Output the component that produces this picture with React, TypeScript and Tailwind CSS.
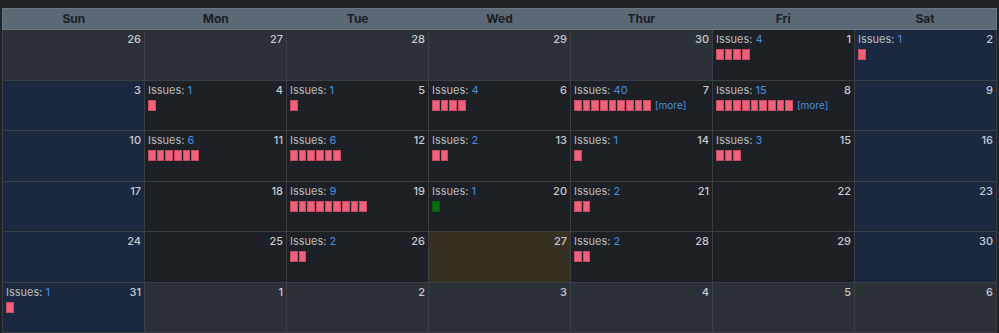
import React from 'react'

type Day = {
  n: number
  kind: 'other' | 'cur' | 'weekend' | 'today'
  issues?: number
  bars?: number
  green?: boolean
  more?: boolean
}

const o = (n: number): Day => ({ n, kind: 'other' })
const c = (n: number, issues?: number, bars?: number, more?: boolean): Day => ({
  n,
  kind: 'cur',
  issues,
  bars: bars ?? issues,
  more,
})
const w = (n: number, issues?: number): Day => ({ n, kind: 'weekend', issues, bars: issues })

const weeks: Day[][] = [
  [o(26), o(27), o(28), o(29), o(30), c(1, 4), w(2, 1)],
  [w(3), c(4, 1), c(5, 1), c(6, 4), c(7, 40, 9, true), c(8, 15, 9, true), w(9)],
  [w(10), c(11, 6), c(12, 6), c(13, 2), c(14, 1), c(15, 3), w(16)],
  [w(17), c(18), c(19, 9), { n: 20, kind: 'cur', issues: 1, bars: 1, green: true }, c(21, 2), c(22), w(23)],
  [w(24), c(25), c(26, 2), { n: 27, kind: 'today' }, c(28, 2), c(29), w(30)],
  [w(31, 1), o(1), o(2), o(3), o(4), o(5), o(6)],
]

const days = ['Sun', 'Mon', 'Tue', 'Wed', 'Thur', 'Fri', 'Sat']

const bg = {
  other: 'bg-[#2c3138]',
  cur: 'bg-[#1d2025]',
  weekend: 'bg-[#1b2940]',
  today: 'bg-[#35301f]',
}

function Cell({ d }: { d: Day }) {
  return (
    <div className={`h-[50.5px] border-r border-b border-[#3a3f46] px-[3px] pt-[3px] ${bg[d.kind]}`}>
      <div className="flex items-start justify-between text-[11px] leading-[13px]">
        <div>
          {d.issues !== undefined && (
            <span className="text-[#b9bdc3]">
              Issues: <span className="text-[#4a90e2]">{d.issues}</span>
            </span>
          )}
        </div>
        <span className="font-medium text-[#c8cbcf]">{d.n}</span>
      </div>
      {d.bars ? (
        <div className="mt-[3px] flex items-center">
          <div className="flex gap-px">
            {Array.from({ length: d.bars }).map((_, i) => (
              <div
                key={i}
                className={
                  d.green
                    ? 'h-[11px] w-[7.67px] border border-[#0b5a0b] bg-[#0b6e0b]'
                    : 'h-[11px] w-[7.67px] border border-[#c94a61] bg-[#f0627c]'
                }
              />
            ))}
          </div>
          {d.more && <span className="ml-[4px] text-[10px] leading-[11px] text-[#4a90e2]">[more]</span>}
        </div>
      ) : null}
    </div>
  )
}

export default function App() {
  return (
    <div
      className="h-[333px] w-[999px] overflow-hidden bg-[#1f2226] pt-[8px] pl-[2px]"
      style={{ fontFamily: 'Inter, "Liberation Sans", sans-serif' }}
    >
      <div className="w-[995px]">
        {/* header */}
        <div className="grid h-[22px] grid-cols-7 border border-[#6a7783] bg-[#5b6977]">
          {days.map((d) => (
            <div key={d} className="flex items-center justify-center text-[12px] font-bold text-[#1c2024]">
              {d}
            </div>
          ))}
        </div>
        <div className="border-l border-[#3a3f46]">
          {weeks.map((wk, i) => (
            <div key={i} className="grid grid-cols-7">
              {wk.map((d, j) => (
                <Cell key={j} d={d} />
              ))}
            </div>
          ))}
        </div>
      </div>
    </div>
  )
}
